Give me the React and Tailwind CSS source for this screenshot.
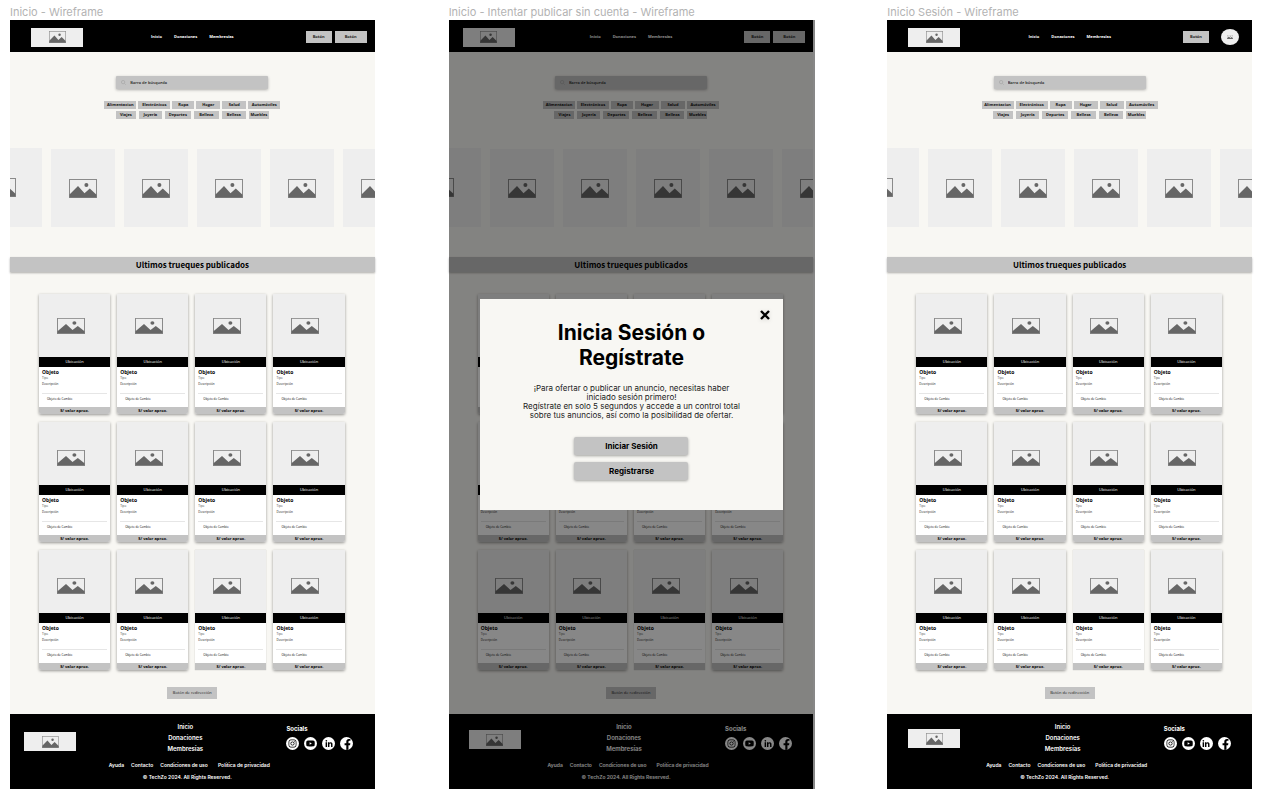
import { FaInstagram, FaYoutube, FaLinkedinIn, FaFacebookF } from "react-icons/fa";

const sans = "font-['Open_Sans','Noto_Sans',sans-serif]";
const heading = "font-['Noto_Sans_CJK_SC','Noto_Sans',sans-serif]";
const display = "font-[Inter,'Liberation_Sans',sans-serif]";

function Picture({ className }) {
  return (
    <svg viewBox="0 0 28 19" preserveAspectRatio="none" className={className} aria-hidden="true">
      <rect x="0.5" y="0.5" width="27" height="18" fill="none" stroke="#8a8a8a" strokeWidth="1" />
      <path d="M0.5 18.5V15.6L9 7L15.5 14.2L20.8 9.6L27.5 15.8V18.5Z" fill="#666" />
      <circle cx="17.4" cy="6" r="2" fill="#666" />
    </svg>
  );
}

function Logo() {
  return (
    <a href="#inicio" aria-label="TechZo" className="flex h-[19px] w-[52px] items-center justify-center bg-[#eeeeee]">
      <Picture className="h-[12px] w-[17px]" />
    </a>
  );
}

function SmallButton({ className }) {
  return (
    <button type="button" className={`h-[12px] bg-[#c3c3c3] text-[4px] leading-none font-bold text-[#222] ${className}`}>
      Botón
    </button>
  );
}

function Header({ logoPad, signedIn }) {
  return (
    <header className="grid h-8 grid-cols-[1fr_auto_1fr] items-center bg-black pt-[2px]">
      <div className={logoPad}>
        <Logo />
      </div>
      <nav className="flex gap-[12px] text-[4px] leading-none font-bold text-white">
        <a href="#inicio">Inicio</a>
        <a href="#donaciones">Donaciones</a>
        <a href="#membresias">Membresías</a>
      </nav>
      {signedIn ? (
        <div className="flex items-center justify-end gap-[12px] pr-[13px]">
          <SmallButton className="w-[26px]" />
          <button type="button" aria-label="Perfil" className="flex h-[16px] w-[18px] items-center justify-center rounded-[50%] bg-[#eeeeee]">
            <Picture className="h-[4px] w-[6px]" />
          </button>
        </div>
      ) : (
        <div className="flex items-center justify-end gap-[3px] pr-[8px]">
          <SmallButton className="w-[26px]" />
          <SmallButton className="w-[32px]" />
        </div>
      )}
    </header>
  );
}

const chipRows = [
  {
    gap: "gap-[2px]",
    chips: [
      ["Alimentacion", "w-[32px]"],
      ["Electrónicos", "w-[32px]"],
      ["Ropa", "w-[22px]"],
      ["Hogar", "w-[24px]"],
      ["Salud", "w-[24px]"],
      ["Automóviles", "w-[32px]"],
    ],
  },
  {
    gap: "gap-[3px]",
    chips: [
      ["Viajes", "w-[20px]"],
      ["Joyería", "w-[23px]"],
      ["Deportes", "w-[26px]"],
      ["Belleza", "w-[25px]"],
      ["Belleza", "w-[24px]"],
      ["Muebles", "w-[20px]"],
    ],
  },
];

function Search() {
  return (
    <form className="flex flex-col items-center pt-[24px]">
      <label className="flex h-[13px] w-[152px] items-center gap-[4px] rounded-[1px] bg-[#c3c3c3] pl-[5px] shadow-[0_1px_3px_rgba(0,0,0,0.3)]">
        <svg viewBox="0 0 12 12" className="size-[5px]" fill="none" stroke="#a3a3a3" strokeWidth="1.4" aria-hidden="true">
          <circle cx="5" cy="5" r="4" />
          <path d="M8 8L11.5 11.5" />
        </svg>
        <input
          type="search"
          aria-label="Barra de búsqueda"
          placeholder="Barra de búsqueda"
          className="h-full min-w-0 flex-1 bg-transparent text-[4px] leading-[6px] font-semibold text-black outline-none placeholder:text-[#222]"
        />
      </label>
      <div className="mt-[12px] flex flex-col items-center gap-[2px]">
        {chipRows.map((row, r) => (
          <div key={r} className={`flex ${row.gap}`}>
            {row.chips.map(([name, width], i) => (
              <button key={i} type="button" className={`h-[8px] bg-[#c3c3c3] text-[4px] leading-none font-bold text-[#111] ${width}`}>
                {name}
              </button>
            ))}
          </div>
        ))}
      </div>
    </form>
  );
}

function Carousel() {
  return (
    <div className="mt-[29px] flex items-end gap-[9px] overflow-hidden">
      <div className="-ml-[49px] flex h-[79px] w-[81px] shrink-0 items-center justify-center bg-[#eeeeee]">
        <Picture className="h-[19px] w-[28px]" />
      </div>
      {[0, 1, 2, 3, 4].map((i) => (
        <div key={i} className="flex h-[78px] w-[64px] shrink-0 items-center justify-center bg-[#eeeeee]">
          <Picture className="h-[19px] w-[28px]" />
        </div>
      ))}
    </div>
  );
}

function Card({ flat, imagePad }) {
  return (
    <article className={flat ? "shadow-[0_0_1px_rgba(0,0,0,0.25)]" : "rounded-b-[2px] shadow-[0_1px_3px_rgba(0,0,0,0.4)]"}>
      <div className={`flex h-[63px] items-center justify-center bg-[#eeeeee] pr-[8px] ${imagePad}`}>
        <Picture className="h-[16px] w-[28px]" />
      </div>
      <p className="flex h-[10px] items-center justify-center bg-black text-[4px] leading-none text-white">
        Ubicación
      </p>
      <div className="flex h-[40px] flex-col bg-white px-[3px] pt-[2px] text-[3px] leading-[6px] text-[#111]">
        <h3 className="text-[5px] leading-[7px] font-bold text-black">Objeto</h3>
        <p className="leading-[5px] text-[#444]">Tipo</p>
        <p>Descripción</p>
        <p className="mt-[6px] border-t border-[#e6e6e6] pt-[2px] pl-[5px]">Objeto de Cambio</p>
      </div>
      <p className={`flex h-[7px] items-center justify-center bg-[#c3c3c3] text-[4px] leading-none font-bold text-black ${flat ? "" : "rounded-b-[2px]"}`}>
        S/ valor aprox.
      </p>
    </article>
  );
}

const cards = Array.from({ length: 12 }, (_, i) => i);

function Social({ label, align, children }) {
  return (
    <a href="#social" aria-label={label} className={`flex size-[13px] justify-center overflow-hidden rounded-full bg-white text-black ${align}`}>
      {children}
    </a>
  );
}

function Footer({ logoPad }) {
  return (
    <footer className={`bg-black text-white ${display}`}>
      <div className="grid h-[46px] grid-cols-[135fr_80fr_149fr]">
        <div className={logoPad}>
          <Logo />
        </div>
        <nav className="flex flex-col items-center pt-[7px] text-[6px] leading-[11px] font-semibold">
          <a href="#inicio">Inicio</a>
          <a href="#donaciones">Donaciones</a>
          <a href="#membresias">Membresías</a>
        </nav>
        <div className="pt-[11px] pl-[61px]">
          <h2 className="text-[6px] leading-[8px] font-bold">Socials</h2>
          <div className="mt-[4px] flex gap-[5px]">
            <Social label="Instagram" align="items-center"><FaInstagram className="size-[9px]" /></Social>
            <Social label="YouTube" align="items-center"><FaYoutube className="size-[9px]" /></Social>
            <Social label="LinkedIn" align="items-center"><FaLinkedinIn className="size-[8px]" /></Social>
            <Social label="Facebook" align="items-end pl-[2px]"><FaFacebookF className="size-[11px]" /></Social>
          </div>
        </div>
      </div>
      <nav className="flex justify-center gap-[7px] pr-[6px] text-[5px] leading-[11px] font-semibold">
        <a href="#ayuda">Ayuda</a>
        <a href="#contacto">Contacto</a>
        <a href="#condiciones">Condiciones de uso</a>
        <a href="#privacidad" className="pl-[3px]">Política de privacidad</a>
      </nav>
      <p className="pt-[1px] pr-[10px] pb-[6px] text-center text-[5px] leading-[11px] font-semibold">
        © TechZo 2024. All Rights Reserved.
      </p>
    </footer>
  );
}

function LoginDialog() {
  const button = "h-[18px] w-[114px] rounded-[2px] bg-[#c3c3c3] text-[8px] leading-none font-bold shadow-[0_1px_3px_rgba(0,0,0,0.35)]";
  return (
    <div className="absolute inset-y-0 left-0 -right-[2px] flex items-center justify-center bg-black/47 pr-[1px]">
      <section
        role="dialog"
        aria-labelledby="login-title"
        className={`relative flex h-[211px] w-[303px] flex-col items-center bg-[#f8f7f3] pt-[21px] text-center text-black ${display}`}
      >
        <button type="button" aria-label="Cerrar" className="absolute top-[11px] right-[13px] drop-shadow-sm">
          <svg viewBox="0 0 10 10" className="size-[10px]" stroke="#000" strokeWidth="2.4" aria-hidden="true">
            <path d="M1 1L9 9M9 1L1 9" />
          </svg>
        </button>
        <h2 id="login-title" className="w-[200px] text-[21px] leading-[25px] font-bold">Inicia Sesión o Regístrate</h2>
        <p className="mt-[14px] text-[8px] leading-[9px] text-[#222]">
          ¡Para ofertar o publicar un anuncio, necesitas haber
          <br />
          iniciado sesión primero!
          <br />
          Regístrate en solo 5 segundos y accede a un control total
          <br />
          sobre tus anuncios, así como la posibilidad de ofertar.
        </p>
        <div className="mt-[17px] flex flex-col gap-[7px]">
          <button type="button" className={button}>Iniciar Sesión</button>
          <button type="button" className={button}>Registrarse</button>
        </div>
      </section>
    </div>
  );
}

function Screen({ title, headerPad, footerPad, signedIn, dialog }) {
  return (
    <section className="min-w-0">
      <h1 className={`flex h-5 items-center pt-[5px] text-[11px] leading-none whitespace-nowrap text-[#b3b3b3] ${display}`}>
        {title}
      </h1>
      <div className={`relative bg-[#f8f7f3] ${sans}`}>
        <Header logoPad={headerPad} signedIn={signedIn} />
        <main>
          <Search />
          <Carousel />
          <h2 className={`mt-[30px] flex h-[15px] items-center justify-center bg-[#c3c3c3] text-[8px] leading-none font-bold text-black shadow-[0_1px_2px_rgba(0,0,0,0.3)] ${heading}`}>
            Ultimos trueques publicados
          </h2>
          <div className="mt-[22px] grid grid-cols-4 gap-x-[7px] gap-y-[8px] pr-[30px] pl-[29px]">
            {cards.map((i) => (
              <Card key={i} flat={i === 10} imagePad={i < 4 ? "" : "pt-[8px]"} />
            ))}
          </div>
          <div className="flex justify-center pt-[17px] pb-[15px]">
            <button type="button" className="h-[12px] w-[50px] bg-[#c3c3c3] text-[4px] leading-none text-[#222]">
              Botón de redirección
            </button>
          </div>
        </main>
        <Footer logoPad={footerPad} />
        {dialog && <LoginDialog />}
      </div>
    </section>
  );
}

export default function App() {
  return (
    <div className="grid grid-cols-3 gap-[74px] bg-white pr-[12px] pb-[9px] pl-[10px]">
      <Screen title="Inicio - Wireframe" headerPad="pl-[21px]" footerPad="pt-[18px] pl-[14px]" />
      <Screen
        title="Inicio - Intentar publicar sin cuenta - Wireframe"
        headerPad="pl-[14px]"
        footerPad="pt-[16px] pl-[20px]"
        dialog
      />
      <Screen title="Inicio Sesión - Wireframe" headerPad="pl-[21px]" footerPad="pt-[15px] pl-[21px]" signedIn />
    </div>
  );
}
